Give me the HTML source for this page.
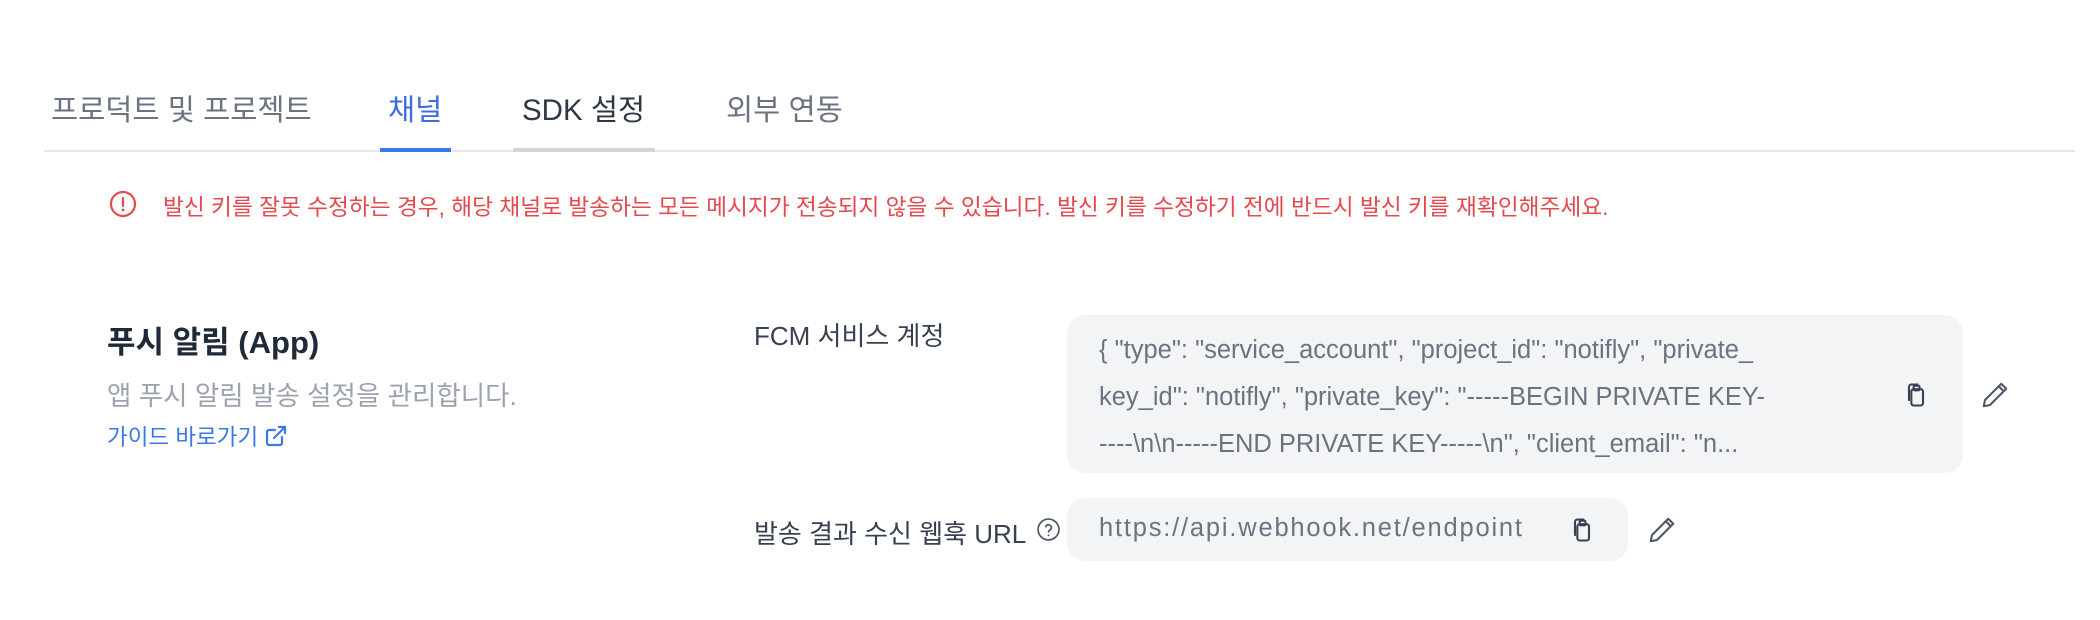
<!DOCTYPE html>
<html><head><meta charset="utf-8"><style>
body{margin:0;width:2100px;height:620px;background:#fff;font-family:"Liberation Sans","Noto Sans CJK KR",sans-serif;position:relative;overflow:hidden}
.a{position:absolute;white-space:nowrap}
.tab{font-size:29.5px;color:#6b7280;top:87px}
.box{position:absolute;background:#f3f4f6;border-radius:18px}
.mono{font-size:25.5px;color:#6b7280}
</style></head><body>
<div class="a tab" style="left:51px">프로덕트 및 프로젝트</div>
<div class="a tab" style="left:388px;color:#3b6fe0">채널</div>
<div class="a tab" style="left:522px;color:#2f3645">SDK 설정</div>
<div class="a tab" style="left:726px">외부 연동</div>
<div class="a" style="left:44px;top:150px;width:2031px;height:2px;background:#e5e7eb"></div>
<div class="a" style="left:380px;top:148px;width:71px;height:4px;background:#3b78e7"></div>
<div class="a" style="left:513px;top:148px;width:142px;height:4px;background:#d1d5db"></div>

<svg class="a" style="left:109px;top:190px" width="28" height="28" viewBox="0 0 28 28"><circle cx="14" cy="14" r="12" fill="none" stroke="#e5484d" stroke-width="2.2"/><line x1="14" y1="8" x2="14" y2="16" stroke="#e5484d" stroke-width="2.2" stroke-linecap="round"/><circle cx="14" cy="20" r="1.4" fill="#e5484d"/></svg>
<div class="a" style="left:163px;top:189px;font-size:22.7px;color:#e5484d">발신 키를 잘못 수정하는 경우, 해당 채널로 발송하는 모든 메시지가 전송되지 않을 수 있습니다. 발신 키를 수정하기 전에 반드시 발신 키를 재확인해주세요.</div>

<div class="a" style="left:107px;top:317px;font-size:31px;font-weight:bold;color:#1f2937">푸시 알림 (App)</div>
<div class="a" style="left:107px;top:374px;font-size:26.5px;color:#9ca3af">앱 푸시 알림 발송 설정을 관리합니다.</div>
<div class="a" style="left:107px;top:420px;font-size:22.5px;color:#3b78e7">가이드 바로가기 <svg width="24" height="24" viewBox="0 0 24 24" style="vertical-align:-3px" fill="none" stroke="#3b78e7" stroke-width="2.2" stroke-linecap="round" stroke-linejoin="round"><path d="M18 13v6a2 2 0 0 1-2 2H5a2 2 0 0 1-2-2V8a2 2 0 0 1 2-2h6"/><path d="M15 3h6v6"/><path d="M10 14L21 3"/></svg></div>

<div class="a" style="left:754px;top:316px;font-size:26px;color:#374151">FCM 서비스 계정</div>
<div class="box" style="left:1067px;top:315px;width:896px;height:158px"></div>
<div class="a mono" style="left:1099px;top:327px;line-height:47px">{ "type": "service_account", "project_id": "notifly", "private_<br>key_id": "notifly", "private_key": "-----BEGIN PRIVATE KEY-<br>----\n\n-----END PRIVATE KEY-----\n", "client_email": "n...</div>

<div class="a" style="left:754px;top:514px;font-size:26px;color:#374151">발송 결과 수신 웹훅 URL</div>
<svg class="a" style="left:1036px;top:517px" width="25" height="25" viewBox="0 0 24 24" fill="none" stroke="#4b5563" stroke-width="1.6"><circle cx="12" cy="12" r="10"/><path d="M9.2 9.3a2.9 2.9 0 0 1 5.6 1c0 2-2.8 2.4-2.8 4" stroke-linecap="round"/><circle cx="12" cy="17.6" r=".9" fill="#4b5563" stroke="none"/></svg>
<div class="box" style="left:1067px;top:498px;width:561px;height:63px"></div>
<div class="a mono" style="left:1099px;top:514px;letter-spacing:1.8px">https://api.webhook.net/endpoint</div>

<svg class="a" style="left:1902px;top:381px" width="28" height="28" viewBox="0 0 24 24" fill="none" stroke="#374151" stroke-width="1.8" stroke-linejoin="round"><rect x="8" y="7" width="10" height="14" rx="2"/><path d="M6 17V5a2 2 0 0 1 2-2h6"/><rect x="10" y="4" width="5" height="4" rx="1"/></svg>
<svg class="a" style="left:1568px;top:516px" width="28" height="28" viewBox="0 0 24 24" fill="none" stroke="#374151" stroke-width="1.8" stroke-linejoin="round"><rect x="8" y="7" width="10" height="14" rx="2"/><path d="M6 17V5a2 2 0 0 1 2-2h6"/><rect x="10" y="4" width="5" height="4" rx="1"/></svg>
<svg class="a" style="left:1980px;top:380px" width="30" height="30" viewBox="0 0 24 24" fill="none" stroke="#4b5563" stroke-width="1.6" stroke-linejoin="round"><path d="M17 3l4 4L8 20l-5 1 1-5z"/><path d="M15 5l4 4"/></svg>
<svg class="a" style="left:1647px;top:515px" width="30" height="30" viewBox="0 0 24 24" fill="none" stroke="#4b5563" stroke-width="1.6" stroke-linejoin="round"><path d="M17 3l4 4L8 20l-5 1 1-5z"/><path d="M15 5l4 4"/></svg>
</body></html>
